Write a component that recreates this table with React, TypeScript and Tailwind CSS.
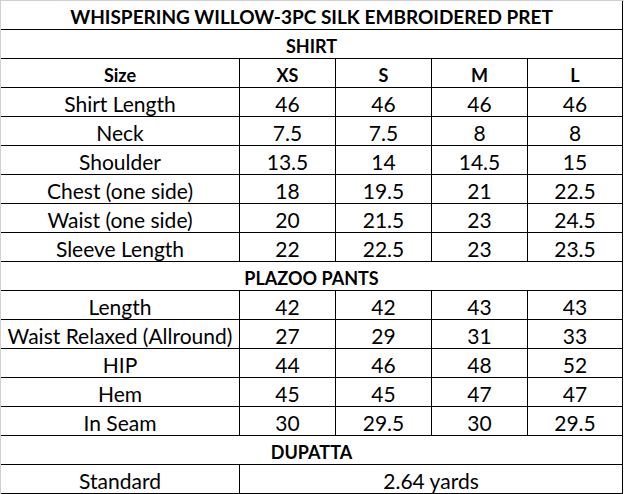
const sizes = ['XS', 'S', 'M', 'L'];

const shirt: [string, string[]][] = [
  ['Shirt Length', ['46', '46', '46', '46']],
  ['Neck', ['7.5', '7.5', '8', '8']],
  ['Shoulder', ['13.5', '14', '14.5', '15']],
  ['Chest (one side)', ['18', '19.5', '21', '22.5']],
  ['Waist (one side)', ['20', '21.5', '23', '24.5']],
  ['Sleeve Length', ['22', '22.5', '23', '23.5']],
];

const pants: [string, string[]][] = [
  ['Length', ['42', '42', '43', '43']],
  ['Waist Relaxed (Allround)', ['27', '29', '31', '33']],
  ['HIP', ['44', '46', '48', '52']],
  ['Hem', ['45', '45', '47', '47']],
  ['In Seam', ['30', '29.5', '30', '29.5']],
];

const cell = 'h-[29px] flex items-center justify-center border-r border-b border-black pt-[3px] whitespace-nowrap';

function Row({ label, values }: { label: string; values: string[] }) {
  return (
    <>
      <div className={cell}>{label}</div>
      {values.map((v, i) => (
        <div key={i} className={cell}>{v}</div>
      ))}
    </>
  );
}

function Section({ title, big }: { title: string; big?: boolean }) {
  return (
    <div className={`${cell} col-span-5 font-bold ${big ? 'text-[19px]' : 'text-[18px]'}`}>{title}</div>
  );
}

export default function App() {
  return (
    <div className="w-[624px] h-[494px] bg-white overflow-hidden">
      <div
        className="border-t border-l border-[#d0d0d0] grid grid-cols-[239px_96px_96px_96px_95px] text-[21px] leading-none text-black"
        style={{ fontFamily: 'Lato, "Open Sans", sans-serif' }}
      >
        <Section title="WHISPERING WILLOW-3PC SILK EMBROIDERED PRET" big />
        <Section title="SHIRT" />
        <div className={`${cell} font-bold text-[18px]`}>Size</div>
        {sizes.map((s) => (
          <div key={s} className={`${cell} font-bold text-[18px]`}>{s}</div>
        ))}
        {shirt.map(([label, values]) => (
          <Row key={label} label={label} values={values} />
        ))}
        <Section title="PLAZOO PANTS" />
        {pants.map(([label, values]) => (
          <Row key={label} label={label} values={values} />
        ))}
        <Section title="DUPATTA" />
        <div className={cell}>Standard</div>
        <div className={`${cell} col-span-4`}>2.64 yards</div>
      </div>
    </div>
  );
}
